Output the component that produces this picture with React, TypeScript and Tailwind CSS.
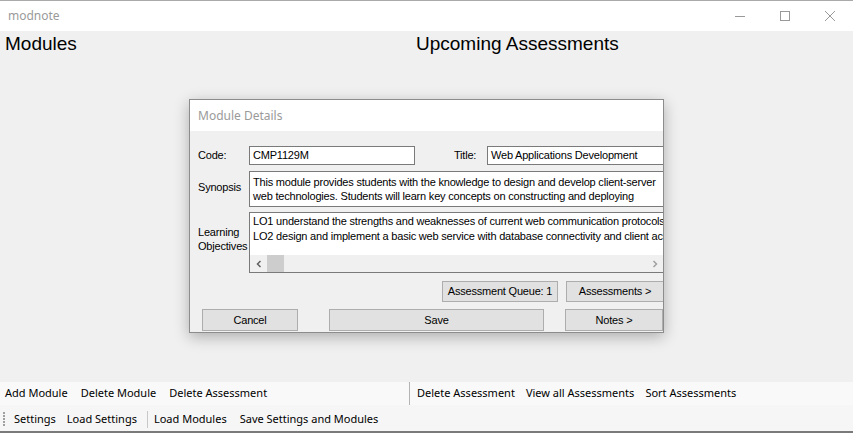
import React from 'react';

const menuFont = { fontFamily: '"Noto Sans", "Open Sans", sans-serif' };

const Field = ({ children, className }: { children: React.ReactNode; className?: string }) => (
    <div className={`shrink-0 bg-white border border-[#7a7a7a] px-[3px] text-[11px] leading-[14px] text-black whitespace-nowrap overflow-hidden ${className ?? ''}`}>
        {children}
    </div>
);

const Btn = ({ label, className }: { label: string; className?: string }) => (
    <div className={`shrink-0 flex items-center justify-center bg-[#e1e1e1] border border-[#adadad] text-[11px] text-black ${className ?? ''}`}>
        {label}
    </div>
);

const ModuleDetails = () => {
    return (
        <div className="absolute left-[189px] top-[99px] w-[475px] h-[234px] border border-[#8c8c8c] bg-[#f0f0f0] shadow-[0_4px_14px_rgba(0,0,0,0.28)] overflow-hidden flex flex-col">
            <div className="h-[31px] bg-white flex items-center pl-[8px] text-[12px] text-[#9a9a9a]" style={menuFont}>
                Module Details
            </div>
            <div className="flex flex-col pl-[8px] pt-[15px] text-[11px] tracking-[-0.2px] text-black" style={{ fontFamily: '"Liberation Sans", Arial, sans-serif' }}>
                <div className="flex items-center h-[19px]">
                    <div className="w-[51px] shrink-0">Code:</div>
                    <Field className="w-[166px] h-[19px] leading-[17px]">CMP1129M</Field>
                    <div className="ml-[39px] w-[33px] shrink-0">Title:</div>
                    <Field className="w-[190px] h-[19px] leading-[17px]">Web Applications Development</Field>
                </div>
                <div className="flex mt-[6px] h-[36px]">
                    <div className="w-[51px] shrink-0 mt-[9px] leading-[14px]">Synopsis</div>
                    <Field className="w-[430px] h-[36px] pt-[3px]">
                        <div>This module provides students with the knowledge to design and develop client-server</div>
                        <div>web technologies. Students will learn key concepts on constructing and deploying</div>
                    </Field>
                </div>
                <div className="flex mt-[5px] h-[61px]">
                    <div className="w-[51px] shrink-0 leading-[14px] mt-[13px]">
                        <div>Learning</div>
                        <div>Objectives</div>
                    </div>
                    <div className="w-[430px] shrink-0 h-[61px] bg-white border border-[#7a7a7a] flex flex-col text-[11px]">
                        <div className="flex-1 px-[3px] pt-[1px] leading-[15px] whitespace-nowrap overflow-hidden">
                            <div>LO1 understand the strengths and weaknesses of current web communication protocols</div>
                            <div>LO2 design and implement a basic web service with database connectivity and client access</div>
                        </div>
                        <div className="h-[17px] bg-[#f0f0f0] flex items-center w-[413px]">
                            <div className="w-[17px] flex items-center justify-center">
                                <svg width="8" height="8" viewBox="0 0 8 8"><path d="M5.5 1 L2.5 4 L5.5 7" fill="none" stroke="#606060" strokeWidth="1.5" /></svg>
                            </div>
                            <div className="w-[17px] h-[17px] bg-[#cdcdcd]" />
                            <div className="flex-1" />
                            <div className="w-[17px] flex items-center justify-center">
                                <svg width="8" height="8" viewBox="0 0 8 8"><path d="M2.5 1 L5.5 4 L2.5 7" fill="none" stroke="#a0a0a0" strokeWidth="1.5" /></svg>
                            </div>
                        </div>
                    </div>
                </div>
                <div className="flex mt-[8px] h-[21px]">
                    <Btn label="Assessment Queue: 1" className="ml-[244px] w-[116px] h-[21px]" />
                    <Btn label="Assessments >" className="ml-[8px] w-[98px] h-[21px]" />
                </div>
                <div className="flex mt-[7px] h-[22px]">
                    <Btn label="Cancel" className="ml-[4px] w-[96px] h-[22px]" />
                    <Btn label="Save" className="ml-[31px] w-[215px] h-[22px]" />
                    <Btn label="Notes >" className="ml-[21px] w-[98px] h-[22px]" />
                </div>
            </div>
        </div>
    );
};

const App = () => {
    return (
        <div className="relative w-[853px] h-[433px] overflow-hidden bg-[#f0f0f0] flex flex-col">
            <div className="h-[31px] bg-white border-t border-[#aaaaaa] flex items-center" style={menuFont}>
                <div className="pl-[8px] text-[12px] text-[#9a9a9a] flex-1">modnote</div>
                <div className="flex items-center text-[#999999]">
                    <div className="w-[45px] flex justify-center">
                        <svg width="12" height="12" viewBox="0 0 12 12"><path d="M1 6.5 H11" stroke="#999" strokeWidth="1" /></svg>
                    </div>
                    <div className="w-[45px] flex justify-center">
                        <svg width="12" height="12" viewBox="0 0 12 12"><rect x="1.5" y="1.5" width="9" height="9" fill="none" stroke="#999" strokeWidth="1" /></svg>
                    </div>
                    <div className="w-[45px] mr-[1px] flex justify-center">
                        <svg width="12" height="12" viewBox="0 0 12 12"><path d="M1 1 L11 11 M11 1 L1 11" stroke="#999" strokeWidth="1" /></svg>
                    </div>
                </div>
            </div>
            <div className="flex-1 flex" style={{ fontFamily: '"Liberation Sans", Arial, sans-serif' }}>
                <div className="w-[411px] pl-[5px] pt-[2px] text-[19px] leading-[22px] text-black">Modules</div>
                <div className="flex-1 pl-[5px] pt-[2px] text-[19px] leading-[22px] text-black">Upcoming Assessments</div>
            </div>
            <div className="h-[23px] flex text-[11px] text-black" style={menuFont}>
                <div className="w-[409px] bg-[#f9f9f9] rounded-tr-[3px] flex items-center gap-[13px] pl-[5px]">
                    <span>Add Module</span>
                    <span>Delete Module</span>
                    <span>Delete Assessment</span>
                </div>
                <div className="w-[1px] bg-[#b5b5b5]" />
                <div className="flex-1 bg-[#f9f9f9] flex items-center gap-[11px] pl-[7px]">
                    <span>Delete Assessment</span>
                    <span>View all Assessments</span>
                    <span>Sort Assessments</span>
                </div>
            </div>
            <div className="h-[26px] pt-[2px] bg-[#f6f6f6] flex items-center text-[11px] text-black" style={menuFont}>
                <div className="w-[3px] ml-[3px] h-[16px] flex flex-col justify-between py-[1px]">
                    {[0, 1, 2, 3, 4].map((i) => (
                        <div key={i} className="w-[2px] h-[2px] bg-[#a0a0a0]" />
                    ))}
                </div>
                <div className="flex items-center gap-[11px] pl-[8px]">
                    <span>Settings</span>
                    <span>Load Settings</span>
                </div>
                <div className="w-[1px] h-[17px] bg-[#c8c8c8] ml-[10px] mr-[6px]" />
                <div className="flex items-center gap-[13px]">
                    <span>Load Modules</span>
                    <span>Save Settings and Modules</span>
                </div>
            </div>
            <div className="h-[2px] bg-[#7a7a7a]" />
            <ModuleDetails />
        </div>
    );
};

export default App;
